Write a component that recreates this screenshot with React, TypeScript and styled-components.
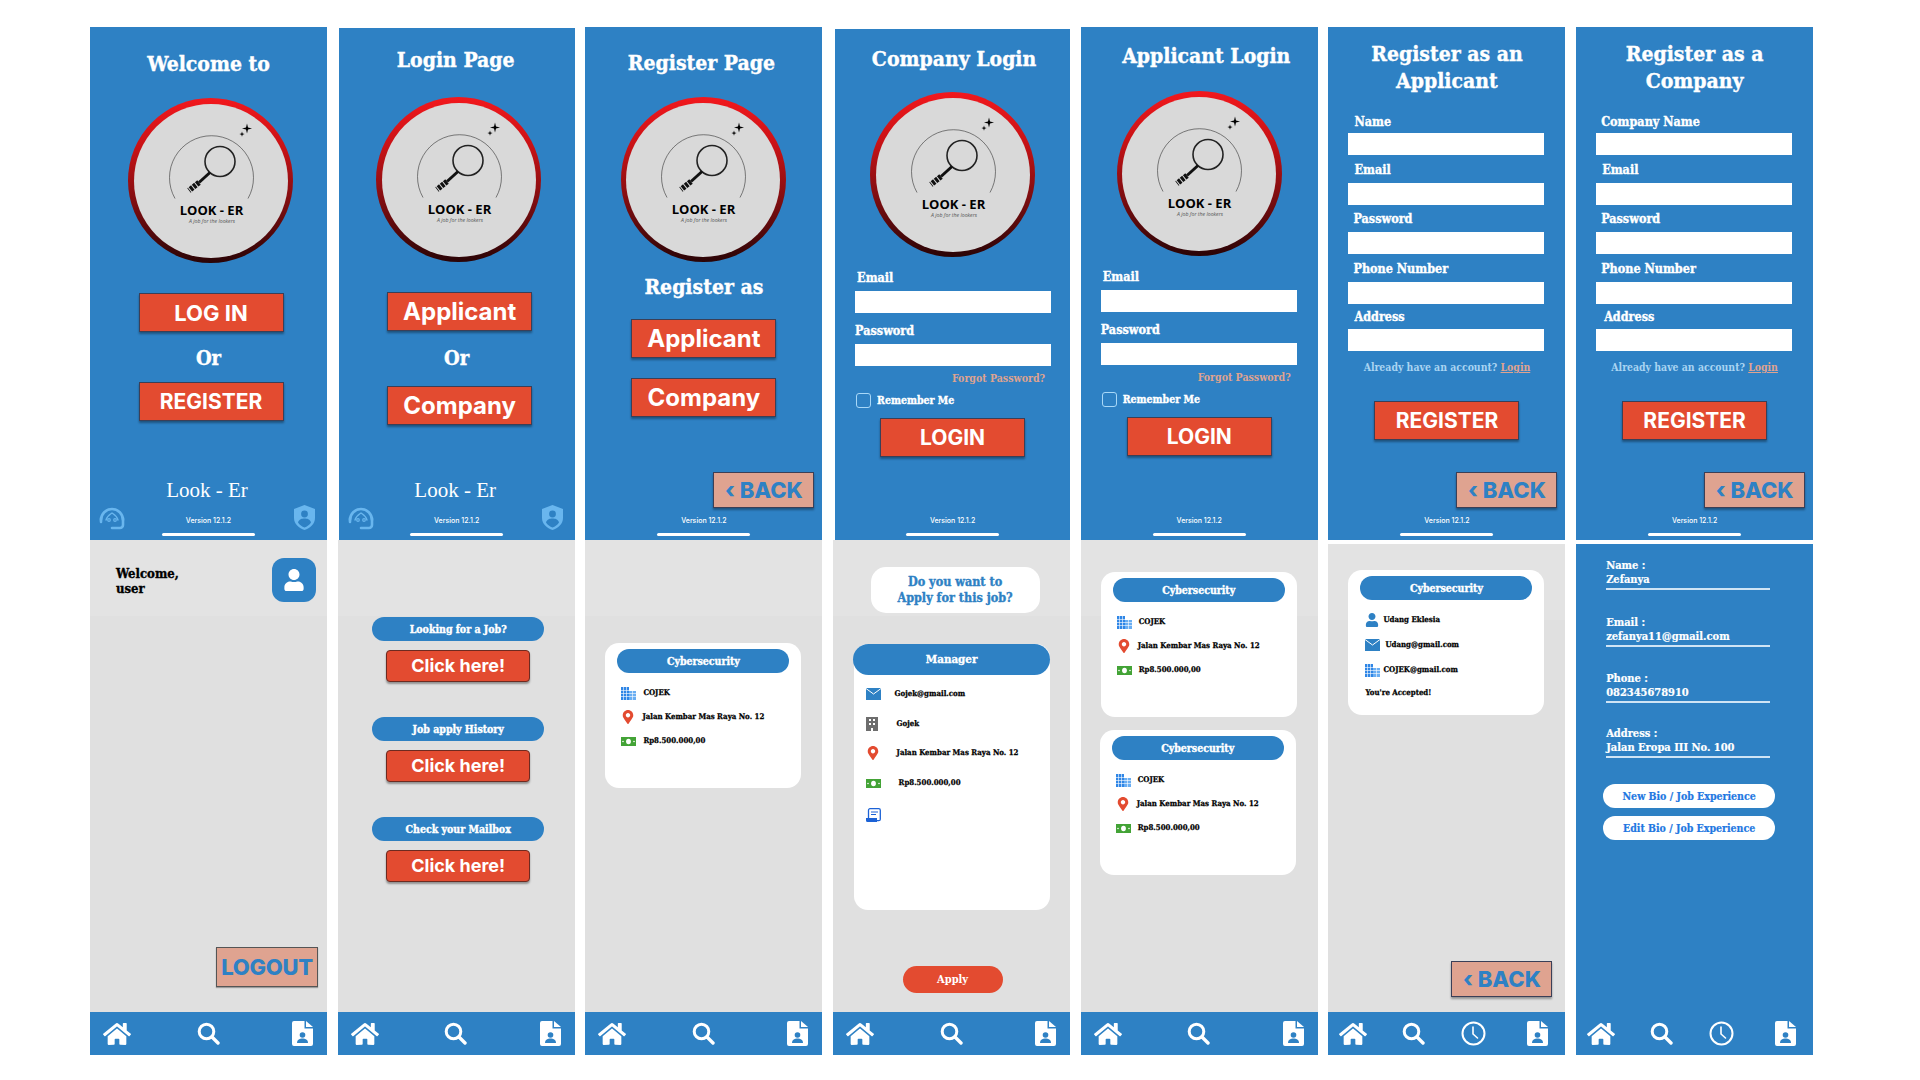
import React from "react";
import styled, { createGlobalStyle, css } from "styled-components";
import { FaHome, FaMapMarkerAlt, FaUser } from "react-icons/fa";

const BLUE = "#2e81c4";
const RED = "#e34b30";
const GREY = "#e0e0e0";
const SALMON = "#dfa390";
const SKY = "#69b6ee";
const SLAB = `"DejaVu Serif Condensed", "DejaVu Serif", serif`;
const SANS = `Inter, "Liberation Sans", sans-serif`;

const heavy = css`
  -webkit-text-stroke: 0.35px currentColor;
`;

const Global = createGlobalStyle`
  html, body { margin: 0; padding: 0; background: #fff; overflow: hidden; }
  * { box-sizing: border-box; }
`;

const Page = styled.div`
  width: 1920px; height: 1080px; display: flex; gap: 10.7px; padding: 27px 0 0 90px;
`;
const Column = styled.div`
  width: 237px; display: flex; flex-direction: column; flex: none;
`;
const TopPanel = styled.section<{ $drop?: number; $inset?: number }>`
  height: ${(p) => 513 - (p.$drop ?? 0)}px; margin: ${(p) => p.$drop ?? 0}px 0 0 ${(p) => p.$inset ?? 0}px;
  background: ${BLUE}; color: #fff; display: flex; flex-direction: column; align-items: center;
`;
const LowerPanel = styled.section<{ $gap?: number; $blue?: boolean }>`
  height: ${(p) => 515 - (p.$gap ?? 0)}px; margin-top: ${(p) => p.$gap ?? 0}px;
  background: ${(p) => (p.$blue ? BLUE : `linear-gradient(#e3e3e3 0 76px, ${GREY} 76px)`)};
  display: flex; flex-direction: column;
`;
const LowerBody = styled.div<{ $center?: boolean; $pad?: number; $shift?: number }>`
  flex: 1; min-height: 0; display: flex; flex-direction: column; padding: ${(p) => p.$pad ?? 0}px 0 0 ${(p) => p.$shift ?? 0}px;
  align-items: ${(p) => (p.$center ? "center" : "stretch")};
`;
const Title = styled.h1<{ $mt: number; $ml?: number; $size?: number }>`
  margin: ${(p) => p.$mt}px 0 0 ${(p) => p.$ml ?? 0}px; font: 700 ${(p) => p.$size ?? 21}px/27px ${SLAB};
  text-align: center; ${heavy}
`;
const LogoRing = styled.div<{ $mt: number; $ml?: number }>`
  width: 165px; height: 165px; flex: none; border-radius: 50%; padding: 5.5px;
  margin: ${(p) => p.$mt}px 0 0 ${(p) => p.$ml ?? 0}px;
  background: linear-gradient(#f2181d 0%, #c81216 30%, #7b0d10 65%, #2a0406 100%);
`;
const LogoFace = styled.div`
  width: 100%; height: 100%; border-radius: 50%; background: #d9d9d9; overflow: hidden;
  svg { display: block; width: 100%; height: 100%; }
`;
const RedButton = styled.button<{ $mt: number; $ml?: number; $size?: number }>`
  width: 145px; height: 39px; flex: none; margin: ${(p) => p.$mt}px 0 0 ${(p) => p.$ml ?? 0}px; padding: 0;
  background: ${RED}; color: #fff; border: 1px solid #3b3f57; box-shadow: 0 2px 2px rgba(0,0,0,.35);
  font: 700 ${(p) => p.$size ?? 21}px/1 ${SANS};
`;
const Or = styled.div<{ $mt: number }>`
  margin-top: ${(p) => p.$mt}px; font: 700 20px/24px ${SLAB}; ${heavy}
`;
const BackButton = styled.button<{ $mt: number; $mr?: number }>`
  width: 101px; height: 36px; flex: none; align-self: flex-end; margin: ${(p) => p.$mt}px ${(p) => p.$mr ?? 8}px 0 0; padding: 0;
  background: ${SALMON}; color: ${BLUE}; border: 1px solid #3b3f57; box-shadow: 0 2px 2px rgba(0,0,0,.35);
  font: 800 22px/1 ${SANS};
`;
const Footer = styled.footer`
  margin-top: auto; width: 100%; display: flex; flex-direction: column; align-items: center; padding-bottom: 4px;
`;
const BrandLine = styled.div`
  font: 400 21px/24px "Liberation Serif", serif; margin: 0 0 3px -3px;
`;
const FooterRow = styled.div`
  width: 100%; display: grid; grid-template-columns: 1fr 93px 1fr; align-items: end;
`;
const FooterIcon = styled.div<{ $right?: boolean }>`
  display: flex; padding: 0 ${(p) => (p.$right ? "12px" : "0")} 6px ${(p) => (p.$right ? "0" : "8px")};
  justify-content: ${(p) => (p.$right ? "flex-end" : "flex-start")};
`;
const VersionBlock = styled.div`
  display: flex; flex-direction: column; align-items: center;
`;
const Version = styled.div`
  font: 500 7px/10px ${SANS}; white-space: nowrap;
`;
const HomeBar = styled.div`
  width: 93px; height: 3px; background: #fff; border-radius: 2px; margin-top: 7px;
`;
const Form = styled.div<{ $mt: number }>`
  align-self: flex-start; margin: ${(p) => p.$mt}px 0 0 20px; width: 196px; display: flex; flex-direction: column;
`;
const FieldLabel = styled.label<{ $x?: number; $mt?: number }>`
  display: block; font: 700 12.5px/15px ${SLAB}; height: 15px; ${heavy}
  margin: ${(p) => p.$mt ?? 0}px 0 0 ${(p) => p.$x ?? 0}px; white-space: nowrap;
`;
const TextBox = styled.div<{ $mt?: number }>`
  width: 196px; height: 22px; background: #fff; margin-top: ${(p) => p.$mt ?? 5}px;
`;
const Forgot = styled.div`
  align-self: flex-end; margin: 6px 6px 0 0; color: ${SALMON}; font: 700 10.5px/13px ${SLAB}; white-space: nowrap;
`;
const RememberRow = styled.div`
  display: flex; align-items: center; gap: 6px; margin: 8px 0 0 1px;
`;
const CheckBox = styled.span`
  width: 15px; height: 15px; border: 1.5px solid #a8d8f8; border-radius: 3px; flex: none;
`;
const RememberText = styled.span`
  font: 700 10.5px/15px ${SLAB}; ${heavy}
`;
const Already = styled.div`
  margin-top: 10px; text-align: center; color: #a9d4f2; font: 700 10.4px/13px ${SLAB}; white-space: nowrap;
`;
const LoginLink = styled.span`
  color: ${SALMON}; text-decoration: underline;
`;
const Nav = styled.nav<{ $four?: boolean }>`
  height: 43px; flex: none; background: ${BLUE}; display: grid; align-items: center;
  grid-template-columns: ${(p) => (p.$four ? "50px 70px 50px 1fr" : "1fr auto 1fr")};
  padding: ${(p) => (p.$four ? "0 17px 0 0" : "0 14px 0 13px")};
  color: #fff;
  & > * { justify-self: center; }
  & > *:first-child { justify-self: ${(p) => (p.$four ? "center" : "start")}; }
  & > *:last-child { justify-self: end; }
`;
const GreetRow = styled.div`
  display: flex; justify-content: space-between; align-items: flex-start; padding: 18px 11px 0 26px;
`;
const Greeting = styled.div`
  font: 700 13px/15px ${SLAB}; color: #000; padding-top: 8px; ${heavy}
`;
const AvatarButton = styled.div`
  width: 44px; height: 44px; border-radius: 12px; background: ${BLUE}; color: #fff;
  display: flex; align-items: center; justify-content: center;
`;
const LogoutButton = styled.button`
  width: 102px; height: 40px; align-self: flex-end; margin: auto 9px 25px 0; padding: 0;
  background: ${SALMON}; color: ${BLUE}; border: 1px solid #555; box-shadow: 0 1px 1px rgba(0,0,0,.3);
  font: 800 22px/1 ${SANS}; letter-spacing: -0.3px;
`;
const Pill = styled.div<{ $mt?: number; $wide?: boolean }>`
  width: ${(p) => (p.$wide ? "197px" : "172px")}; height: ${(p) => (p.$wide ? "31px" : "24px")};
  margin-top: ${(p) => p.$mt ?? 0}px; border-radius: 16px; background: ${BLUE}; color: #fff; flex: none;
  display: flex; align-items: center; justify-content: center; font: 700 ${(p) => (p.$wide ? "11.5px" : "10.5px")}/1 ${SLAB}; ${heavy}
`;
const ClickButton = styled.button`
  width: 144px; height: 32px; margin-top: 9px; padding: 0; border: 1px solid #6e2a20; border-radius: 4px;
  background: ${RED}; color: #fff; box-shadow: 0 2px 2px rgba(0,0,0,.35); font: 700 18px/1 ${SANS};
`;
const Card = styled.article<{ $mt?: number; $ml?: number; $h?: number; $flush?: boolean }>`
  width: 196px; height: ${(p) => p.$h ?? 145}px; flex: none; margin: ${(p) => p.$mt ?? 0}px 0 0 ${(p) => p.$ml ?? 0}px;
  background: #fff; border-radius: 14px; display: flex; flex-direction: column; align-items: center; padding-top: ${(p) => (p.$flush ? 0 : 6)}px;
`;
const RowList = styled.div<{ $mt: number; $pad: number }>`
  align-self: stretch; margin-top: ${(p) => p.$mt}px; padding-left: ${(p) => p.$pad}px; display: flex; flex-direction: column;
`;
const InfoRow = styled.div<{ $h: number }>`
  height: ${(p) => p.$h}px; display: flex; align-items: center; color: #000;
`;
const IconSlot = styled.span<{ $w: number }>`
  width: ${(p) => p.$w}px; flex: none; display: flex; justify-content: flex-start; align-items: center;
`;
const InfoText = styled.span<{ $size?: number }>`
  font: 700 ${(p) => p.$size ?? 7.8}px/1 ${SLAB}; white-space: nowrap; -webkit-text-stroke: 0.25px currentColor;
`;
const Bubble = styled.div`
  width: 169px; height: 46px; margin: 27px 0 0 7px; border-radius: 15px; background: #fff; color: ${BLUE}; text-align: center;
  display: flex; align-items: center; justify-content: center; font: 700 12.5px/16px ${SLAB}; ${heavy}
`;
const ApplyButton = styled.button`
  width: 100px; height: 27px; margin: 56px 0 0 2px; padding: 0; border: 0; border-radius: 14px; background: ${RED}; color: #fff;
  font: 700 11px/1 ${SLAB};
`;
const ProfileField = styled.div<{ $mt: number }>`
  width: 164px; margin: ${(p) => p.$mt}px 0 0 30px; color: #fff; border-bottom: 2px solid #cfe4f5; padding-bottom: 1px;
  font: 700 11px/14px ${SLAB}; -webkit-text-stroke: 0.2px currentColor;
`;
const ProfileButton = styled.div<{ $mt: number }>`
  width: 172px; height: 24px; margin: ${(p) => p.$mt}px 0 0 27px; border-radius: 12px; background: #fff; color: #1f78e2;
  display: flex; align-items: center; justify-content: center; font: 700 10.5px/1 ${SLAB}; -webkit-text-stroke: 0.2px currentColor;
`;

const Logo = ({ mt, ml }: { mt: number; ml?: number }) => (
  <LogoRing $mt={mt} $ml={ml}>
    <LogoFace>
      <svg viewBox="14 13.500 154 154">
        <path d="M55 108A42 42 0 1 1 128 108" fill="none" stroke="#333" strokeWidth=".6" />
        <circle cx="100" cy="71" r="15" fill="none" stroke="#222" strokeWidth="1.600" />
        <path d="M90 82L79 92" stroke="#111" strokeWidth="3" />
        <path d="M79 92L69 100" stroke="#111" strokeWidth="5.500" strokeDasharray="3 1" />
        <path d="M127 33l1 4 4 1-4 1-1 4-1-4-4-1 4-1z" fill="#000" />
        <path d="M122 41l.6 2 2 .6-2 .6-.6 2-.6-2-2-.6 2-.6z" fill="#000" />
        <text x="91.500" y="124" textAnchor="middle" fontFamily="'Open Sans', sans-serif" fontWeight="700" fontSize="13" fill="#000">LOOK - ER</text>
        <text x="92" y="132" textAnchor="middle" fontFamily="'Open Sans', sans-serif" fontStyle="italic" fontSize="5.200" fill="#555">A job for the lookers</text>
      </svg>
    </LogoFace>
  </LogoRing>
);

const Headset = () => (
  <svg width="28" height="25" viewBox="0 0 28 25" fill="none" stroke={SKY} strokeWidth="2.600" strokeLinecap="round">
    <path d="M3 15A11 11 0 0 1 25 15" />
    <path d="M3 13v4M25 13v7a3 3 0 0 1-3 3h-8" />
    <path d="M8 15c1-4 3-5 6-7 3 2 5 3 6 7" strokeWidth="1.400" />
    <circle cx="11" cy="15" r=".6" />
    <circle cx="17" cy="15" r=".6" />
  </svg>
);
const Shield = () => (
  <svg width="21" height="25" viewBox="0 0 21 25">
    <path d="M10.500 0L21 4v9c0 6-5 10-10.500 12C5 23 0 19 0 13V4z" fill={SKY} />
    <circle cx="10.500" cy="9" r="3.400" fill={BLUE} />
    <path d="M4 17.500c1-3.500 4-4 6.500-4s5.500.5 6.500 4c-1.500 2.500-4 4-6.500 5-2.500-1-5-2.500-6.500-5z" fill={BLUE} />
  </svg>
);
const SearchIcon = () => (
  <svg width="23" height="23" viewBox="0 0 23 23" fill="none" stroke="#fff" strokeLinecap="round">
    <circle cx="9.500" cy="9.500" r="7.300" strokeWidth="3" />
    <path d="M15 15l6 6" strokeWidth="3.400" />
  </svg>
);
const ClockIcon = () => (
  <svg width="25" height="25" viewBox="0 0 25 25" fill="none" stroke="#fff" strokeLinecap="round">
    <circle cx="12.500" cy="12.500" r="11" strokeWidth="2" />
    <path d="M12 6v7l4.500 4" strokeWidth="1.600" />
  </svg>
);
const FileIcon = () => (
  <svg width="21" height="25" viewBox="0 0 21 25">
    <path d="M2 0h10.500v7.500H21V23a2 2 0 0 1-2 2H2a2 2 0 0 1-2-2V2a2 2 0 0 1 2-2z" fill="#fff" />
    <path d="M14 0l7 6h-7z" fill="#fff" />
    <circle cx="10.500" cy="14" r="2.800" fill={BLUE} />
    <path d="M5 22c0-3.500 3-4.500 5.500-4.500S16 18.500 16 22z" fill={BLUE} />
  </svg>
);
const MailIcon = () => (
  <svg width="15" height="12" viewBox="0 0 15 12">
    <rect width="15" height="12" fill={BLUE} />
    <path d="M0 .5l7.500 5.500L15 .5" fill="none" stroke="#fff" strokeWidth="1" />
  </svg>
);
const BuildingIcon = () => (
  <svg width="15" height="13" viewBox="0 0 15 13">
    <rect width="8" height="13" fill="#2f86e6" />
    <rect x="8" y="4" width="7" height="9" fill="#6aaef2" />
    <path d="M2.500 0v13M5.500 0v13M0 3.500h8M0 6.500h15M0 9.500h15M11.500 4v9" stroke="#fff" strokeWidth=".6" />
  </svg>
);
const GreyBuilding = () => (
  <svg width="12" height="14" viewBox="0 0 12 14">
    <rect width="12" height="14" fill="#6d6d6d" />
    <path d="M3 2h2v2H3zM7 2h2v2H7zM3 6h2v2H3zM7 6h2v2H7zM5 11h2v3H5z" fill="#fff" />
  </svg>
);
const MoneyIcon = () => (
  <svg width="15" height="9" viewBox="0 0 15 9">
    <rect width="15" height="9" fill="#43a336" />
    <ellipse cx="7.500" cy="4.500" rx="2.400" ry="2.800" fill="#fff" />
    <circle cx="2" cy="4.500" r=".8" fill="#fff" />
    <circle cx="13" cy="4.500" r=".8" fill="#fff" />
  </svg>
);
const DocIcon = () => (
  <svg width="15" height="14" viewBox="0 0 15 14">
    <rect x="2.500" y=".7" width="11.800" height="12" rx="1.500" fill="#fff" stroke="#1c62d6" strokeWidth="1.300" />
    <path d="M5 4h7M5 6.500h5" stroke="#1c62d6" strokeWidth="1" />
    <path d="M0 10h11v4H1.500A1.500 1.500 0 0 1 0 12.500z" fill="#1c62d6" />
  </svg>
);
const Pin = () => <FaMapMarkerAlt size={14} color={RED} />;

const Foot = ({ brand, icons }: { brand?: boolean; icons?: boolean }) => (
  <Footer>
    {brand && <BrandLine>Look - Er</BrandLine>}
    <FooterRow>
      <FooterIcon>{icons && <Headset />}</FooterIcon>
      <VersionBlock>
        <Version>Version 12.1.2</Version>
        <HomeBar />
      </VersionBlock>
      <FooterIcon $right>{icons && <Shield />}</FooterIcon>
    </FooterRow>
  </Footer>
);

const BottomNav = ({ four }: { four?: boolean }) => (
  <Nav $four={four}>
    <FaHome size={28} />
    <SearchIcon />
    {four && <ClockIcon />}
    <FileIcon />
  </Nav>
);

const LoginScreen = ({ title, drop, mt, inset, logoMt, titleX }: { title: string; drop: number; mt: number; inset?: number; logoMt: number; titleX: number }) => (
  <TopPanel $drop={drop} $inset={inset}>
    <Title $mt={mt} $ml={titleX}>{title}</Title>
    <Logo mt={logoMt} />
    <Form $mt={13}>
      <FieldLabel $x={2}>Email</FieldLabel>
      <TextBox $mt={6} />
      <FieldLabel $mt={10}>Password</FieldLabel>
      <TextBox $mt={6} />
      <Forgot>Forgot Password?</Forgot>
      <RememberRow>
        <CheckBox />
        <RememberText>Remember Me</RememberText>
      </RememberRow>
    </Form>
    <RedButton $mt={10}>LOGIN</RedButton>
    <Foot />
  </TopPanel>
);

const RegisterScreen = ({ lines, first, firstX, ax }: { lines: [string, string]; first: string; firstX: number; ax: number }) => (
  <TopPanel>
    <Title $mt={13}>{lines[0]}<br />{lines[1]}</Title>
    <Form $mt={20}>
      <FieldLabel $x={firstX}>{first}</FieldLabel>
      <TextBox $mt={4} />
      <FieldLabel $x={6} $mt={7}>Email</FieldLabel>
      <TextBox $mt={6} />
      <FieldLabel $x={5} $mt={6}>Password</FieldLabel>
      <TextBox $mt={6} />
      <FieldLabel $x={5} $mt={7}>Phone Number</FieldLabel>
      <TextBox $mt={6} />
      <FieldLabel $x={ax} $mt={5}>Address</FieldLabel>
      <TextBox $mt={5} />
    </Form>
    <Already>Already have an account? <LoginLink>Login</LoginLink></Already>
    <RedButton $mt={27}>REGISTER</RedButton>
    <BackButton $mt={32}>‹ BACK</BackButton>
    <Foot />
  </TopPanel>
);

const JobCard = ({ mt, ml }: { mt: number; ml: number }) => (
  <Card $mt={mt} $ml={ml}>
    <Pill>Cybersecurity</Pill>
    <RowList $mt={8} $pad={16}>
      <InfoRow $h={24}><IconSlot $w={22}><BuildingIcon /></IconSlot><InfoText>COJEK</InfoText></InfoRow>
      <InfoRow $h={24}><IconSlot $w={21}><Pin /></IconSlot><InfoText>Jalan Kembar Mas Raya No. 12</InfoText></InfoRow>
      <InfoRow $h={24}><IconSlot $w={22}><MoneyIcon /></IconSlot><InfoText>Rp8.500.000,00</InfoText></InfoRow>
    </RowList>
  </Card>
);

const ProfileEntry = ({ mt, label, value }: { mt: number; label: string; value: string }) => (
  <ProfileField $mt={mt}>{label}<br />{value}</ProfileField>
);

export default function App() {
  return (
    <>
      <Global />
      <Page>
        <Column>
          <TopPanel>
            <Title $mt={23}>Welcome to</Title>
            <Logo mt={21} ml={4} />
            <RedButton $mt={30} $ml={5} $size={22}>LOG IN</RedButton>
            <Or $mt={14}>Or</Or>
            <RedButton $mt={12} $ml={5}>REGISTER</RedButton>
            <Foot brand icons />
          </TopPanel>
          <LowerPanel>
            <LowerBody>
              <GreetRow>
                <Greeting>Welcome,<br />user</Greeting>
                <AvatarButton><FaUser size={22} /></AvatarButton>
              </GreetRow>
              <LogoutButton>LOGOUT</LogoutButton>
            </LowerBody>
            <BottomNav />
          </LowerPanel>
        </Column>

        <Column>
          <TopPanel $drop={1} $inset={1}>
            <Title $mt={18} $ml={-2}>Login Page</Title>
            <Logo mt={24} ml={4} />
            <RedButton $mt={30} $ml={6} $size={24}>Applicant</RedButton>
            <Or $mt={15}>Or</Or>
            <RedButton $mt={16} $ml={6} $size={24}>Company</RedButton>
            <Foot brand icons />
          </TopPanel>
          <LowerPanel>
            <LowerBody $center $pad={77} $shift={4}>
              <Pill>Looking for a Job?</Pill>
              <ClickButton>Click here!</ClickButton>
              <Pill $mt={35}>Job apply History</Pill>
              <ClickButton>Click here!</ClickButton>
              <Pill $mt={35}>Check your Mailbox</Pill>
              <ClickButton>Click here!</ClickButton>
            </LowerBody>
            <BottomNav />
          </LowerPanel>
        </Column>

        <Column>
          <TopPanel>
            <Title $mt={22} $ml={-5}>Register Page</Title>
            <Logo mt={21} ml={-1} />
            <Title $mt={11}>Register as</Title>
            <RedButton $mt={19} $ml={0} $size={24}>Applicant</RedButton>
            <RedButton $mt={20} $ml={0} $size={24}>Company</RedButton>
            <BackButton $mt={55}>‹ BACK</BackButton>
            <Foot />
          </TopPanel>
          <LowerPanel>
            <LowerBody $pad={103}>
              <JobCard mt={0} ml={20} />
            </LowerBody>
            <BottomNav />
          </LowerPanel>
        </Column>

        <Column>
          <LoginScreen title="Company Login" drop={2} mt={16} inset={2} logoMt={20} titleX={3} />
          <LowerPanel>
            <LowerBody $center>
              <Bubble>Do you want to<br />Apply for this job?</Bubble>
              <Card $mt={31} $h={266} $flush>
                <Pill $wide>Manager</Pill>
                <RowList $mt={4} $pad={12}>
                  <InfoRow $h={30}><IconSlot $w={29}><MailIcon /></IconSlot><InfoText>Gojek@gmail.com</InfoText></InfoRow>
                  <InfoRow $h={29}><IconSlot $w={31}><GreyBuilding /></IconSlot><InfoText>Gojek</InfoText></InfoRow>
                  <InfoRow $h={30}><IconSlot $w={31}><Pin /></IconSlot><InfoText>Jalan Kembar Mas Raya No. 12</InfoText></InfoRow>
                  <InfoRow $h={30}><IconSlot $w={33}><MoneyIcon /></IconSlot><InfoText>Rp8.500.000,00</InfoText></InfoRow>
                  <InfoRow $h={33}><IconSlot $w={31}><DocIcon /></IconSlot></InfoRow>
                </RowList>
              </Card>
              <ApplyButton>Apply</ApplyButton>
            </LowerBody>
            <BottomNav />
          </LowerPanel>
        </Column>

        <Column>
          <LoginScreen title="Applicant Login" drop={0} mt={15} logoMt={22} titleX={14} />
          <LowerPanel>
            <LowerBody $pad={32}>
              <JobCard mt={0} ml={20} />
              <JobCard mt={13} ml={19} />
            </LowerBody>
            <BottomNav />
          </LowerPanel>
        </Column>

        <Column>
          <RegisterScreen lines={["Register as an", "Applicant"]} first="Name" firstX={6} ax={6} />
          <LowerPanel $gap={4}>
            <LowerBody $pad={26}>
              <Card $ml={20}>
                <Pill>Cybersecurity</Pill>
                <RowList $mt={8} $pad={17}>
                  <InfoRow $h={24}><IconSlot $w={18}><FaUser size={14} color={BLUE} /></IconSlot><InfoText>Udang Eklesia</InfoText></InfoRow>
                  <InfoRow $h={25}><IconSlot $w={20}><MailIcon /></IconSlot><InfoText>Udang@gmail.com</InfoText></InfoRow>
                  <InfoRow $h={26}><IconSlot $w={18}><BuildingIcon /></IconSlot><InfoText>COJEK@gmail.com</InfoText></InfoRow>
                  <InfoRow $h={20}><InfoText>You're Accepted!</InfoText></InfoRow>
                </RowList>
              </Card>
              <BackButton $mt={246} $mr={13}>‹ BACK</BackButton>
            </LowerBody>
            <BottomNav four />
          </LowerPanel>
        </Column>

        <Column>
          <RegisterScreen lines={["Register as a", "Company"]} first="Company Name" firstX={5} ax={8} />
          <LowerPanel $gap={4} $blue>
            <LowerBody $pad={15}>
              <ProfileEntry mt={0} label="Name :" value="Zefanya" />
              <ProfileEntry mt={26} label="Email :" value="zefanya11@gmail.com" />
              <ProfileEntry mt={25} label="Phone :" value="082345678910" />
              <ProfileEntry mt={24} label="Address :" value="Jalan Eropa III No. 100" />
              <ProfileButton $mt={26}>New Bio / Job Experience</ProfileButton>
              <ProfileButton $mt={8}>Edit Bio / Job Experience</ProfileButton>
            </LowerBody>
            <BottomNav four />
          </LowerPanel>
        </Column>
      </Page>
    </>
  );
}
